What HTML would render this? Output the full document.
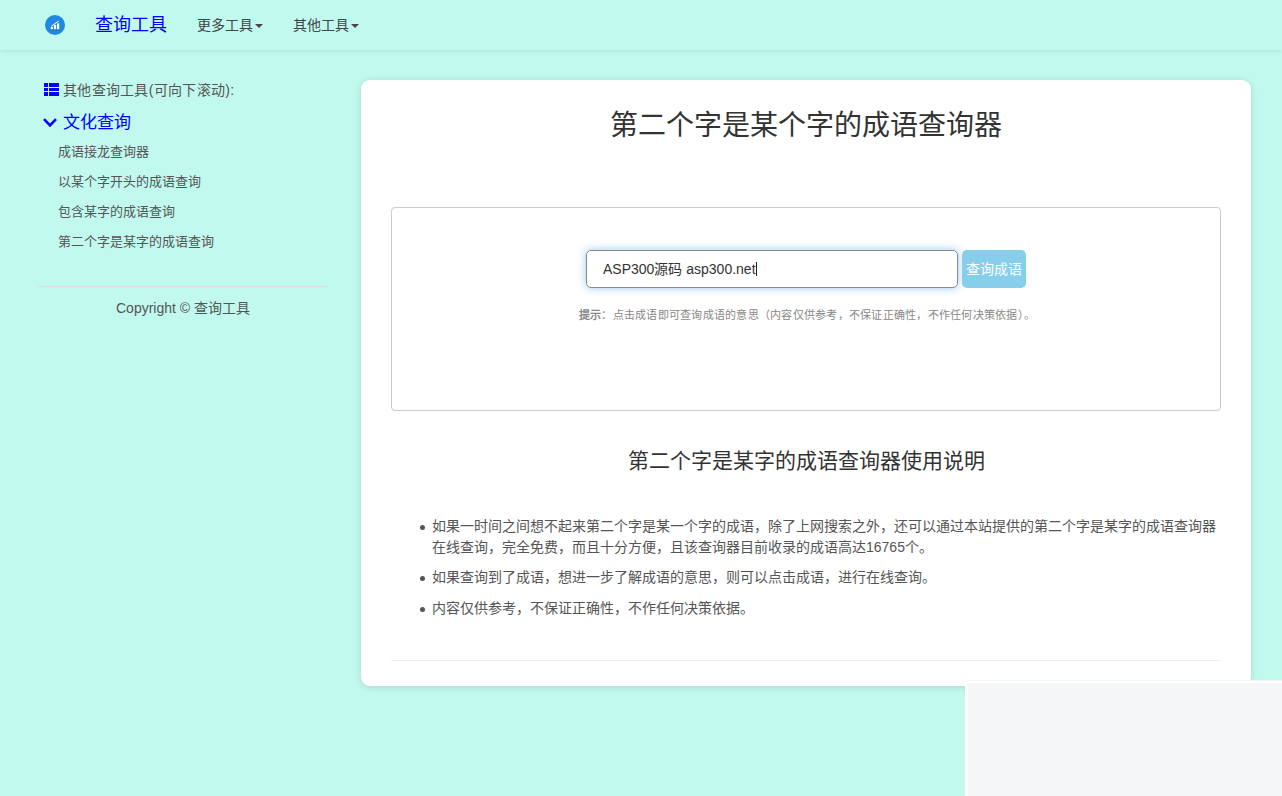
<!DOCTYPE html>
<html lang="zh-CN"><head><meta charset="utf-8">
<style>
*{box-sizing:border-box;margin:0;padding:0}
html,body{width:1282px;height:796px;overflow:hidden}
body{background:#c1f9ee;font-family:"Liberation Sans",sans-serif;color:#555;font-size:14px;position:relative}
.nav{position:absolute;left:0;top:0;width:1282px;height:50px;background:#c1f9ee;box-shadow:0 1px 4px rgba(0,0,0,0.09);z-index:2}
.logo{position:absolute;left:45px;top:15px;width:20px;height:20px}
.brand{position:absolute;left:95px;top:12px;font-size:18px;color:#0000ff;line-height:26px;white-space:nowrap}
.menu{position:absolute;top:16px;font-size:14px;color:#444;line-height:18px;white-space:nowrap}
.caret{position:absolute;top:8px;width:0;height:0;border-left:4px solid transparent;border-right:4px solid transparent;border-top:4px solid #444}
.side-h{position:absolute;left:63px;top:81px;font-size:14px;line-height:18px;color:#555;white-space:nowrap;letter-spacing:0.3px}
.ico{position:absolute}
.side-cat{position:absolute;left:63px;top:111px;font-size:17px;line-height:24px;color:#0000ff;white-space:nowrap}
.side-item{position:absolute;left:58px;font-size:13px;line-height:18px;color:#555;white-space:nowrap}
.hr1{position:absolute;left:38px;top:286px;width:290px;height:1px;background:#d6e0de}
.copy{position:absolute;left:38px;width:290px;top:299px;text-align:center;font-size:14px;line-height:18px;color:#555}
.card{position:absolute;left:361px;top:80px;width:890px;height:606px;background:#fff;border-radius:9px;box-shadow:0 1px 7px rgba(0,0,0,0.13)}
.title{position:absolute;left:0;width:890px;top:26px;text-align:center;font-size:28px;line-height:40px;color:#333;white-space:nowrap}
.box{position:absolute;left:30px;top:127px;width:830px;height:204px;border:1px solid #ccc;border-radius:4px}
.input{position:absolute;left:194px;top:42px;width:372px;height:38px;border:1px solid #8a8a8a;border-radius:5px;box-shadow:0 0 8px rgba(102,175,233,.7);font-size:14px;line-height:36px;padding-left:16px;color:#333;white-space:nowrap}
.cur{display:inline-block;width:1px;height:14px;background:#222;vertical-align:-2px;margin-left:0}
.btn{position:absolute;left:570px;top:42px;width:64px;height:38px;background:#87ceeb;border-radius:5px;color:#fff;font-size:14px;line-height:38px;text-align:center;white-space:nowrap}
.hint{position:absolute;left:0;width:830px;top:100px;text-align:center;font-size:11px;line-height:14px;color:#888;white-space:nowrap;letter-spacing:0.25px}
.sub{position:absolute;left:0;width:890px;top:366px;text-align:center;font-size:21px;line-height:30px;color:#333;white-space:nowrap}
.list{position:absolute;left:71px;top:436px;width:790px;font-size:14px;line-height:21px;color:#555;list-style:none}
.list li{position:relative;margin-bottom:10px}
.list li:first-child{margin-bottom:8.5px}
.list li:before{content:"";position:absolute;left:-12px;top:9px;width:5px;height:5px;border-radius:50%;background:#555}
.hr2{position:absolute;left:30px;top:580px;width:830px;height:1px;background:#eee}
.gray{position:absolute;left:965px;top:680px;width:317px;height:116px;background:#fff;z-index:3}
.gray .ln{position:absolute;left:2px;top:0;right:0;height:1px;background:#f3f3f3}
.gray .in{position:absolute;left:3px;top:3px;right:0;bottom:0;background:#f5f6f8}
</style></head><body>
<div class="nav">
  <svg class="logo" viewBox="0 0 20 20" width="20" height="20">
    <circle cx="10" cy="10" r="10" fill="#1f88e2"/>
    <path d="M6 14.5 L14 14.5 L15 16 L7 16Z" fill="#1a6fb8" opacity=".5"/>
    <rect x="5.8" y="11.8" width="2.2" height="2.4" fill="#fff"/>
    <rect x="8.9" y="9.8" width="2.2" height="4.4" fill="#fff"/>
    <rect x="12" y="8.4" width="2.2" height="5.8" fill="#fff"/>
    <path d="M6.5 11 L13.8 6" stroke="#fff" stroke-width="1" fill="none"/>
  </svg>
  <div class="brand">查询工具</div>
  <div class="menu" style="left:197px">更多工具<span class="caret" style="left:58px"></span></div>
  <div class="menu" style="left:293px">其他工具<span class="caret" style="left:58px"></span></div>
</div>
<svg class="ico" style="left:44px;top:83px" width="15" height="13" viewBox="0 0 15 13">
  <rect x="0" y="0" width="4" height="4" fill="#00f"/><rect x="5" y="0" width="10" height="4" fill="#00f"/>
  <rect x="0" y="5" width="4" height="3" fill="#00f"/><rect x="5" y="5" width="10" height="3" fill="#00f"/>
  <rect x="0" y="9" width="4" height="4" fill="#00f"/><rect x="5" y="9" width="10" height="4" fill="#00f"/>
</svg>
<div class="side-h">其他查询工具(可向下滚动):</div>
<svg class="ico" style="left:40px;top:112px" width="20" height="20" viewBox="0 0 20 20">
  <path d="M4 7.2 L10 13.3 L16 7.2" stroke="#00f" stroke-width="2.6" fill="none"/>
</svg>
<div class="side-cat">文化查询</div>
<div class="side-item" style="top:143px">成语接龙查询器</div>
<div class="side-item" style="top:173px">以某个字开头的成语查询</div>
<div class="side-item" style="top:203px">包含某字的成语查询</div>
<div class="side-item" style="top:233px">第二个字是某字的成语查询</div>
<div class="hr1"></div>
<div class="copy">Copyright © 查询工具</div>
<div class="card">
  <div class="title">第二个字是某个字的成语查询器</div>
  <div class="box">
    <div class="input">ASP300源码 asp300.net<span class="cur"></span></div>
    <div class="btn">查询成语</div>
    <div class="hint"><b>提示</b>：点击成语即可查询成语的意思（内容仅供参考，不保证正确性，不作任何决策依据）。</div>
  </div>
  <div class="sub">第二个字是某字的成语查询器使用说明</div>
  <ul class="list">
    <li>如果一时间之间想不起来第二个字是某一个字的成语，除了上网搜索之外，还可以通过本站提供的第二个字是某字的成语查询器在线查询，完全免费，而且十分方便，且该查询器目前收录的成语高达16765个。</li>
    <li>如果查询到了成语，想进一步了解成语的意思，则可以点击成语，进行在线查询。</li>
    <li>内容仅供参考，不保证正确性，不作任何决策依据。</li>
  </ul>
  <div class="hr2"></div>
</div>
<div class="gray"><div class="ln"></div><div class="in"></div></div>
</body></html>
